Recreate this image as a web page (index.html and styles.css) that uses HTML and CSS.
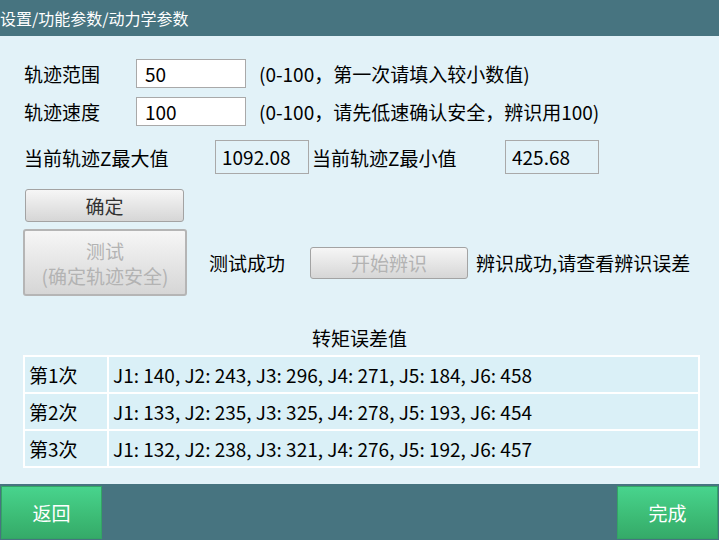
FILE: index.html
```html
<!DOCTYPE html>
<html lang="zh-CN">
<head>
    <meta charset="UTF-8">
    <title>动力学参数</title>
    <link rel="stylesheet" href="styles.css">
</head>
<body>
    <div class="screen">
        <div class="title-bar">设置/功能参数/动力学参数</div>

        <div class="content">
            <div class="form-row">
                <span class="label">轨迹范围</span>
                <div class="input">50</div>
                <span class="hint">(0-100，第一次请填入较小数值)</span>
            </div>
            <div class="form-row row2">
                <span class="label">轨迹速度</span>
                <div class="input">100</div>
                <span class="hint">(0-100，请先低速确认安全，辨识用100)</span>
            </div>

            <div class="z-row">
                <span class="z-label">当前轨迹Z最大值</span>
                <div class="z-box">1092.08</div>
                <span class="z-label second">当前轨迹Z最小值</span>
                <div class="z-box">425.68</div>
            </div>

            <button class="btn btn-confirm">确定</button>

            <div class="test-row">
                <button class="btn btn-test" disabled>测试<br>(确定轨迹安全)</button>
                <span class="status">测试成功</span>
                <button class="btn btn-ident" disabled>开始辨识</button>
                <span class="status ident">辨识成功,请查看辨识误差</span>
            </div>

            <div class="table-title">转矩误差值</div>
            <table class="err-table">
                <tr><td class="nth">第1次</td><td>J1: 140, J2: 243, J3: 296, J4: 271, J5: 184, J6: 458</td></tr>
                <tr><td class="nth">第2次</td><td>J1: 133, J2: 235, J3: 325, J4: 278, J5: 193, J6: 454</td></tr>
                <tr><td class="nth">第3次</td><td>J1: 132, J2: 238, J3: 321, J4: 276, J5: 192, J6: 457</td></tr>
            </table>
        </div>

        <div class="footer">
            <button class="nav-btn">返回</button>
            <button class="nav-btn">完成</button>
        </div>
    </div>
</body>
</html>
```

FILE: styles.css
```css
body {
    margin: 0;
    padding: 0;
    background: #e2f2f8;
    font-family: "Noto Sans CJK SC", sans-serif;
    color: #000;
    overflow: hidden;
}
.screen {
    width: 719px;
    height: 540px;
    display: flex;
    flex-direction: column;
}
.title-bar {
    height: 36px;
    line-height: 36px;
    background: #477480;
    color: #fff;
    font-size: 16px;
}
.content {
    flex: 1;
    background: #e2f2f8;
    padding: 23px 0 0 23px;
    display: flex;
    flex-direction: column;
    align-items: flex-start;
}
.form-row {
    display: flex;
    align-items: center;
    height: 29px;
    font-size: 19px;
}
.row2 {
    margin-top: 9px;
}
.label {
    width: 112px;
    padding-left: 1px;
}
.input {
    width: 100px;
    height: 27px;
    line-height: 27px;
    background: #fff;
    border: 1px solid #a9a9a9;
    padding-left: 8px;
}
.hint {
    margin-left: 13px;
    white-space: nowrap;
}
.z-row {
    display: flex;
    align-items: center;
    margin-top: 14px;
    height: 34px;
    font-size: 19px;
}
.z-label {
    width: 191px;
    padding-left: 1px;
    white-space: nowrap;
}
.z-label.second {
    width: 193px;
    padding-left: 3px;
}
.z-box {
    width: 86px;
    height: 32px;
    line-height: 32px;
    border: 1px solid #a9a9a9;
    padding-left: 6px;
}
.btn {
    font-family: inherit;
    font-size: 19px;
    border: 1px solid #a3a3a3;
    border-radius: 3px;
    background: linear-gradient(180deg, #f6f6f6 0%, #e6e6e6 50%, #d6d6d6 100%);
    color: #333;
    padding: 0;
    line-height: 25px;
}
.btn:disabled {
    color: #b3b3b3;
}
.btn-confirm {
    margin: 15px 0 0 2px;
    width: 159px;
    height: 33px;
}
.test-row {
    display: flex;
    align-items: center;
    margin-top: 7px;
    font-size: 19px;
}
.btn-test {
    width: 164px;
    height: 67px;
    border: 2px solid #b5b5b5;
}
.status {
    margin-left: 22px;
    width: 79px;
    white-space: nowrap;
}
.btn-ident {
    margin-left: 22px;
    width: 158px;
    height: 32px;
}
.status.ident {
    margin-left: 8px;
    width: auto;
}
.table-title {
    align-self: center;
    margin: 30px 0 0 -23px;
    font-size: 19px;
    line-height: 24px;
}
.err-table {
    margin-top: 5px;
    width: 677px;
    border-collapse: collapse;
    font-size: 19px;
}
.err-table td {
    border: 2px solid #fff;
    background: #daf0f7;
    height: 35px;
    padding: 0 5px 0 4px;
    white-space: nowrap;
}
.err-table td.nth {
    width: 73px;
}
.footer {
    height: 56px;
    background: #477480;
    display: flex;
    justify-content: space-between;
    align-items: center;
}
.nav-btn {
    font-family: inherit;
    width: 101px;
    height: 53px;
    margin: 0 1px;
    border: 1px solid #33a465;
    background: linear-gradient(180deg, #48d48d 0%, #3cbb75 60%, #35aa69 100%);
    color: #fff;
    font-size: 19px;
    padding: 0;
}
```
